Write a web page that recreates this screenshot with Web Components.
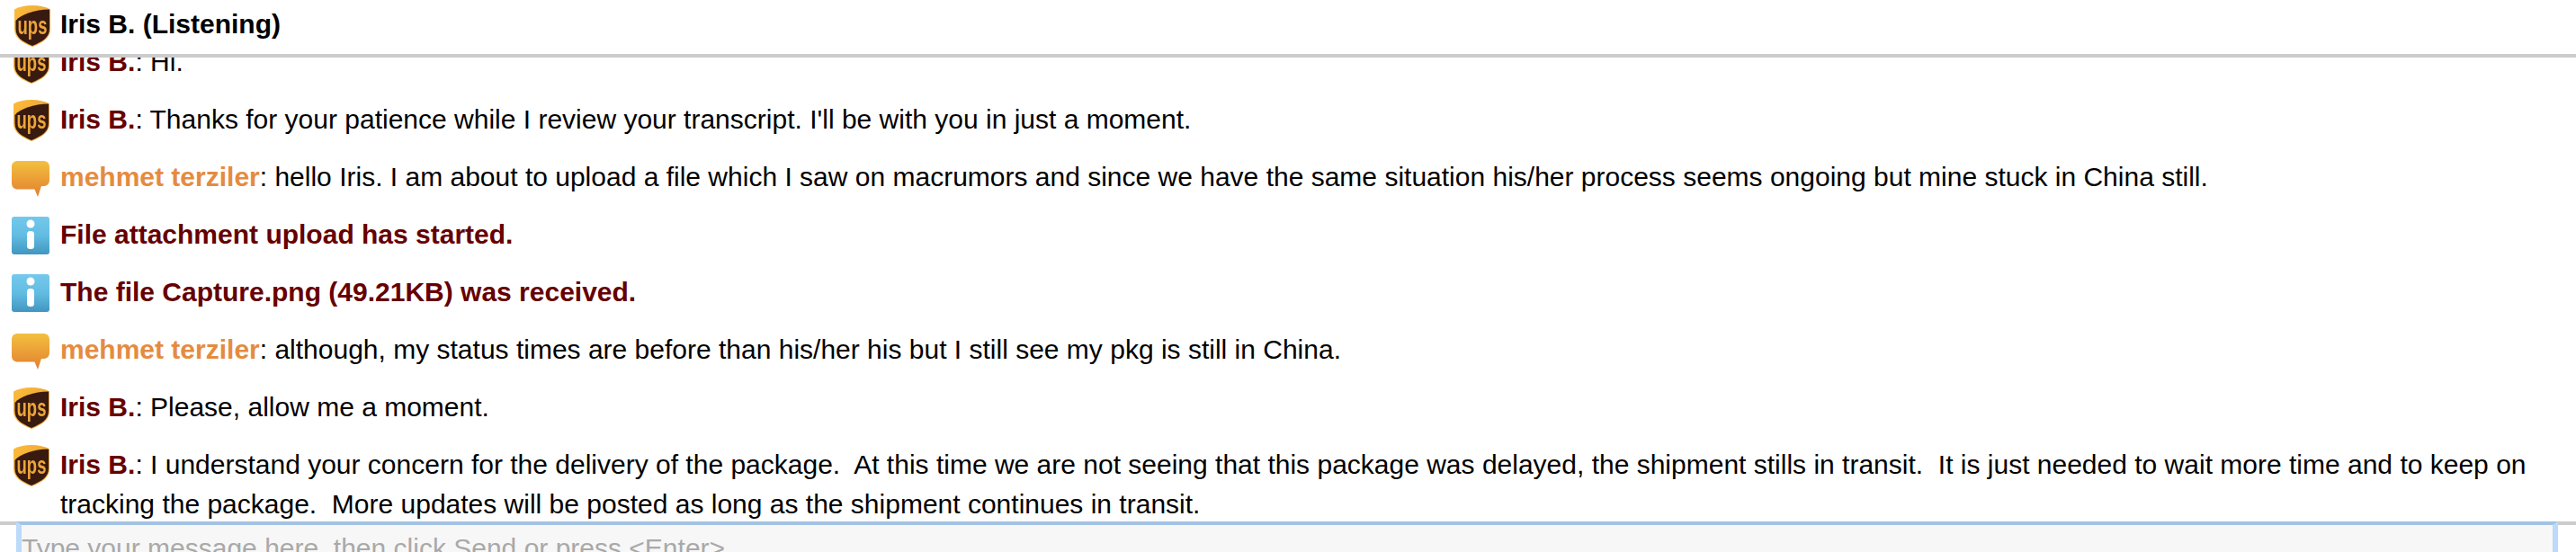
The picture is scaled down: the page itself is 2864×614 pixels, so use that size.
<!DOCTYPE html>
<html>
<head>
<meta charset="utf-8">
<title>Chat</title>
<style>
  html, body { margin: 0; height: 100%; background: #fff; }
  body { font-family: "Liberation Sans", Arial, sans-serif; font-size: 30px; }
</style>
</head>
<body>
<chat-window>
  <chat-header slot="header" name="Iris B. (Listening)"></chat-header>
  <chat-message icon="ups" author="Iris B.">Hi.</chat-message>
  <chat-message icon="ups" author="Iris B.">Thanks for your patience while I review your transcript. I'll be with you in just a moment.</chat-message>
  <chat-message icon="bubble" author="mehmet terziler" tone="customer">hello Iris. I am about to upload a file which I saw on macrumors and since we have the same situation his/her process seems ongoing but mine stuck in China still.</chat-message>
  <chat-message icon="info" tone="system">File attachment upload has started.</chat-message>
  <chat-message icon="info" tone="system">The file Capture.png (49.21KB) was received.</chat-message>
  <chat-message icon="bubble" author="mehmet terziler" tone="customer">although, my status times are before than his/her his but I still see my pkg is still in China.</chat-message>
  <chat-message icon="ups" author="Iris B.">Please, allow me a moment.</chat-message>
  <chat-message icon="ups" author="Iris B.">I understand your concern for the delivery of the package.  At this time we are not seeing that this package was delayed, the shipment stills in transit.  It is just needed to wait more time and to keep on tracking the package.  More updates will be posted as long as the shipment continues in transit.</chat-message>
  <chat-composer slot="composer" placeholder="Type your message here, then click Send or press <Enter>"></chat-composer>
</chat-window>

<script>
const icons = {
  ups: `<svg width="44" height="48" viewBox="0 0 44 48">
      <defs><linearGradient id="g" x1="0" y1="0" x2="1" y2="0.6"><stop offset="0" stop-color="#fdbb3a"/><stop offset="1" stop-color="#e9a437"/></linearGradient></defs>
      <path d="M22 0C14 0 7 1.500 2 4.500V26C2 36.500 10 41 22 46C34 41 42 36.500 42 26V4.500C37 1.500 30 0 22 0Z" fill="url(#g)"/>
      <path d="M3.500 17C10 9.500 24 5 41 4.500V26C41 36 33 40 22 45C11 40 3.500 36 3.500 26Z" fill="#391a11"/>
      <text transform="translate(22 32) scale(.66 1)" text-anchor="middle" font-family="Liberation Sans" font-weight="700" font-size="28" fill="#eba63b">ups</text>
    </svg>`,
  bubble: `<svg width="44" height="46" viewBox="0 0 44 46">
      <defs><linearGradient id="b" x1="0" y1="0" x2="0" y2="1"><stop offset="0" stop-color="#f3c03e"/><stop offset="1" stop-color="#e27f30"/></linearGradient></defs>
      <path d="M7 4H35C39.500 4 42 6.500 42 11V25C42 29.500 39.500 32 35 32H33L29 44L25.500 35.500H7C2.500 35.500 0 33 0 28.500V11C0 6.500 2.500 4 7 4Z" fill="url(#b)"/>
    </svg>`,
  info: `<svg width="44" height="46" viewBox="0 0 44 46">
      <defs><linearGradient id="i" x1="0" y1="0" x2="0" y2="1"><stop offset="0" stop-color="#74c9ec"/><stop offset="0.5" stop-color="#62bce2"/><stop offset="1" stop-color="#4196bf"/></linearGradient></defs>
      <rect x="0" y="2" width="42" height="42" rx="3" fill="url(#i)"/>
      <circle cx="21" cy="10" r="4.500" fill="#fff"/>
      <rect x="17" y="18" width="8" height="20" rx="3.500" fill="#fff"/>
    </svg>`
};

class ChatIcon extends HTMLElement {
  static get observedAttributes() {
    return ['kind'];
  }
  constructor() {
    super();
    this.attachShadow({ mode: 'open' });
  }
  attributeChangedCallback(name, oldValue, newValue) {
    this.shadowRoot.innerHTML = `
      <style>
        :host { display: block; width: 44px; height: 44px; }
        svg { display: block; filter: blur(0.5px); }
      </style>
      ${icons[newValue] || ''}`;
  }
}
customElements.define('chat-icon', ChatIcon);

const headerTemplate = document.createElement('template');
headerTemplate.innerHTML = `
  <style>
    :host {
      display: flex;
      align-items: flex-start;
      flex: none;
      box-sizing: border-box;
      height: 64px;
      padding: 6px 0 0 14px;
      gap: 9px;
      background: #fff;
      border-bottom: 4px solid #ccc;
    }
    .name { font-weight: 700; color: #000; line-height: 42px; font-size: 30px; }
  </style>
  <chat-icon kind="ups"></chat-icon>
  <div class="name"></div>
`;

class ChatHeader extends HTMLElement {
  constructor() {
    super();
    this.attachShadow({ mode: 'open' }).appendChild(headerTemplate.content.cloneNode(true));
  }
  connectedCallback() {
    this.shadowRoot.querySelector('.name').textContent = this.getAttribute('name');
  }
}
customElements.define('chat-header', ChatHeader);

const messageTemplate = document.createElement('template');
messageTemplate.innerHTML = `
  <style>
    :host {
      display: flex;
      flex: none;
      gap: 10px;
      padding: 20px 20px 0 13px;
      line-height: 44px;
      font-size: 30px;
      color: #000;
    }
    chat-icon { flex: none; }
    .text { flex: 1; min-width: 0; white-space: pre-wrap; }
    .author { font-weight: 700; color: #660000; }
    :host([tone="customer"]) .author { color: #e58b3f; }
    :host([tone="system"]) .text { font-weight: 700; color: #660000; }
  </style>
  <chat-icon></chat-icon>
  <div class="text"><slot></slot></div>
`;

class ChatMessage extends HTMLElement {
  constructor() {
    super();
    this.attachShadow({ mode: 'open' }).appendChild(messageTemplate.content.cloneNode(true));
  }
  connectedCallback() {
    const root = this.shadowRoot;
    root.querySelector('chat-icon').setAttribute('kind', this.getAttribute('icon'));
    const author = this.getAttribute('author');
    if (author && !root.querySelector('.author')) {
      const name = document.createElement('span');
      name.className = 'author';
      name.textContent = author;
      root.querySelector('.text').prepend(name, ': ');
    }
  }
}
customElements.define('chat-message', ChatMessage);

const composerTemplate = document.createElement('template');
composerTemplate.innerHTML = `
  <style>
    :host {
      display: block;
      flex: none;
      box-sizing: border-box;
      height: 34px;
      padding: 0 20px 0 18px;
      border-top: 4px solid #ccc;
      background: #fff;
    }
    .box {
      box-sizing: border-box;
      height: 76px;
      margin-top: -4px;
      padding: 4px 0 0;
      background: #f7f7f7;
      border-style: solid;
      border-width: 4px 6px;
      border-color: #a4c3e4 #bcdafa #bcdafa;
      border-radius: 2px;
      font-size: 30px;
      line-height: 44px;
      color: #a9a9a9;
      white-space: nowrap;
    }
  </style>
  <div class="box"></div>
`;

class ChatComposer extends HTMLElement {
  constructor() {
    super();
    this.attachShadow({ mode: 'open' }).appendChild(composerTemplate.content.cloneNode(true));
  }
  connectedCallback() {
    this.shadowRoot.querySelector('.box').textContent = this.getAttribute('placeholder');
  }
}
customElements.define('chat-composer', ChatComposer);

const windowTemplate = document.createElement('template');
windowTemplate.innerHTML = `
  <style>
    :host {
      display: flex;
      flex-direction: column;
      height: 100vh;
      overflow: hidden;
      font-family: "Liberation Sans", Arial, sans-serif;
    }
    .log {
      flex: 1;
      min-height: 0;
      display: flex;
      flex-direction: column;
      justify-content: flex-end;
      overflow: hidden;
    }
    .inner { margin-bottom: -3px; display: flex; flex-direction: column; }
  </style>
  <slot name="header"></slot>
  <div class="log"><div class="inner"><slot></slot></div></div>
  <slot name="composer"></slot>
`;

class ChatWindow extends HTMLElement {
  constructor() {
    super();
    this.attachShadow({ mode: 'open' }).appendChild(windowTemplate.content.cloneNode(true));
  }
}
customElements.define('chat-window', ChatWindow);
</script>
</body>
</html>
